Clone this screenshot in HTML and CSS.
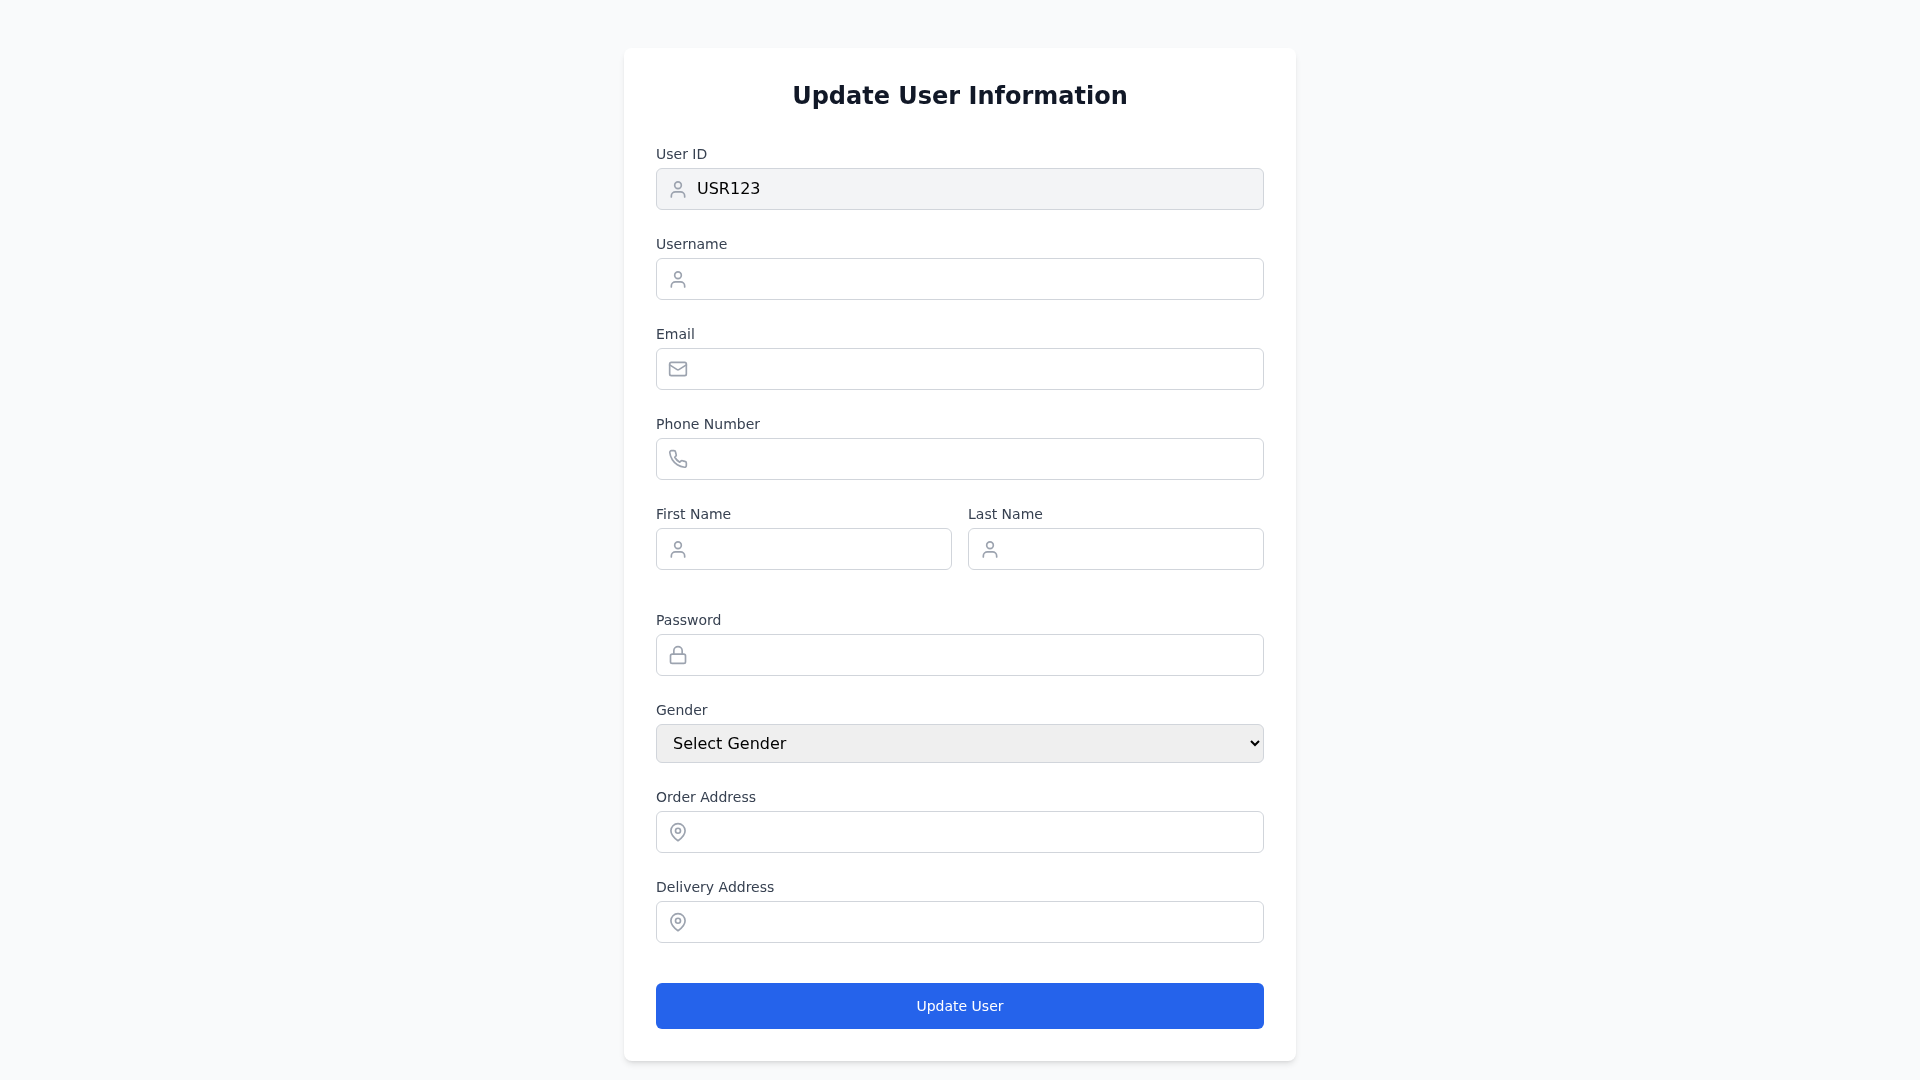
FILE: index.html
```html
<!DOCTYPE html>
<html lang="en">
<head>
    <meta charset="UTF-8">
    <meta name="viewport" content="width=device-width, initial-scale=1.0">
    <title>Update User Information</title>
    <link rel="stylesheet" href="styles.css">
</head>
<body>
    <svg class="icon-defs" width="0" height="0">
        <symbol id="i-user" viewBox="0 0 24 24"><path d="M4 21.5v-1a5 5 0 0 1 5-5h6a5 5 0 0 1 5 5v1"/><circle cx="12" cy="7.5" r="4"/></symbol>
        <symbol id="i-mail" viewBox="0 0 24 24"><rect x="2" y="4" width="20" height="16" rx="2"/><path d="m22 7-8.97 5.7a1.94 1.94 0 0 1-2.06 0L2 7"/></symbol>
        <symbol id="i-phone" viewBox="0 0 24 24"><path d="M22 16.92v3a2 2 0 0 1-2.18 2 19.79 19.79 0 0 1-8.63-3.07 19.5 19.5 0 0 1-6-6 19.79 19.79 0 0 1-3.07-8.67A2 2 0 0 1 4.11 2h3a2 2 0 0 1 2 1.72 12.84 12.84 0 0 0 .7 2.81 2 2 0 0 1-.45 2.11L8.09 9.91a16 16 0 0 0 6 6l1.27-1.27a2 2 0 0 1 2.11-.45 12.84 12.84 0 0 0 2.81.7A2 2 0 0 1 22 16.92z"/></symbol>
        <symbol id="i-lock" viewBox="0 0 24 24"><rect x="3" y="11" width="18" height="11" rx="2"/><path d="M7 11V7a5 5 0 0 1 10 0v4"/></symbol>
        <symbol id="i-pin" viewBox="0 0 24 24"><path d="M20.5 10.5c0 6-8.5 12-8.5 12s-8.5-6-8.5-12a8.5 8.5 0 0 1 17 0Z"/><circle cx="12" cy="10.5" r="3"/></symbol>
    </svg>

    <div class="card">
        <h2>Update User Information</h2>
        <form>
            <div class="field">
                <label for="userId">User ID</label>
                <div class="input-wrap">
                    <svg class="icon"><use href="#i-user"/></svg>
                    <input id="userId" type="text" value="USR123" readonly class="readonly">
                </div>
            </div>
            <div class="field">
                <label for="username">Username</label>
                <div class="input-wrap">
                    <svg class="icon"><use href="#i-user"/></svg>
                    <input id="username" type="text">
                </div>
            </div>
            <div class="field">
                <label for="email">Email</label>
                <div class="input-wrap">
                    <svg class="icon"><use href="#i-mail"/></svg>
                    <input id="email" type="email">
                </div>
            </div>
            <div class="field">
                <label for="phone">Phone Number</label>
                <div class="input-wrap">
                    <svg class="icon"><use href="#i-phone"/></svg>
                    <input id="phone" type="tel">
                </div>
            </div>
            <div class="name-row">
                <div class="field">
                    <label for="firstName">First Name</label>
                    <div class="input-wrap">
                        <svg class="icon"><use href="#i-user"/></svg>
                        <input id="firstName" type="text">
                    </div>
                </div>
                <div class="field">
                    <label for="lastName">Last Name</label>
                    <div class="input-wrap">
                        <svg class="icon"><use href="#i-user"/></svg>
                        <input id="lastName" type="text">
                    </div>
                </div>
            </div>
            <div class="field">
                <label for="password">Password</label>
                <div class="input-wrap">
                    <svg class="icon"><use href="#i-lock"/></svg>
                    <input id="password" type="password">
                </div>
            </div>
            <div class="field">
                <label for="gender">Gender</label>
                <select id="gender">
                    <option>Select Gender</option>
                    <option>Male</option>
                    <option>Female</option>
                    <option>Other</option>
                </select>
            </div>
            <div class="field">
                <label for="orderAddress">Order Address</label>
                <div class="input-wrap">
                    <svg class="icon"><use href="#i-pin"/></svg>
                    <input id="orderAddress" type="text">
                </div>
            </div>
            <div class="field">
                <label for="deliveryAddress">Delivery Address</label>
                <div class="input-wrap">
                    <svg class="icon"><use href="#i-pin"/></svg>
                    <input id="deliveryAddress" type="text">
                </div>
            </div>
            <button type="submit">Update User</button>
        </form>
    </div>
</body>
</html>
```

FILE: styles.css
```css
* {
    box-sizing: border-box;
}
body {
    font-family: 'DejaVu Sans', sans-serif;
    background-color: #f9fafb;
    margin: 0;
    padding: 48px 0 20px;
    min-height: 100vh;
    line-height: 24px;
}
.icon-defs {
    position: absolute;
}
.card {
    width: 672px;
    margin: 0 auto;
    padding: 32px;
    background-color: white;
    border-radius: 8px;
    box-shadow: 0 4px 6px -1px rgba(0,0,0,0.1), 0 2px 4px -2px rgba(0,0,0,0.1);
    will-change: transform;
}
h2 {
    margin: 0 0 32px;
    font-size: 24px;
    line-height: 32px;
    font-weight: 700;
    text-align: center;
    color: #111827;
}
.field {
    margin-bottom: 24px;
}
label {
    display: block;
    margin-bottom: 4px;
    font-size: 14px;
    line-height: 20px;
    font-weight: 500;
    color: #374151;
}
.input-wrap {
    position: relative;
}
.icon {
    position: absolute;
    left: 12px;
    top: 11px;
    width: 20px;
    height: 20px;
    fill: none;
    stroke: #9ca3af;
    stroke-width: 2;
    stroke-linecap: round;
    stroke-linejoin: round;
}
input {
    display: block;
    width: 100%;
    height: 42px;
    padding: 7px 12px 9px 40px;
    border: 1px solid #d1d5db;
    border-radius: 6px;
    font-family: inherit;
    font-size: 16px;
    color: black;
    background-color: white;
}
input.readonly {
    background-color: #f3f4f6;
}
select {
    display: block;
    width: 100%;
    padding: 8px 12px;
    border: 1px solid #d1d5db;
    border-radius: 6px;
    font-family: inherit;
    font-size: 16px;
    color: black;
}
.name-row {
    display: grid;
    grid-template-columns: repeat(2, 1fr);
    gap: 16px;
    margin-bottom: 16px;
}
button {
    display: block;
    width: 100%;
    margin-top: 40px;
    padding: 12px 16px;
    border: none;
    border-radius: 6px;
    background-color: #2563eb;
    color: white;
    font-family: inherit;
    font-size: 14px;
    line-height: 22px;
    font-weight: 500;
    cursor: pointer;
}
button:hover {
    background-color: #1d4ed8;
}
```
